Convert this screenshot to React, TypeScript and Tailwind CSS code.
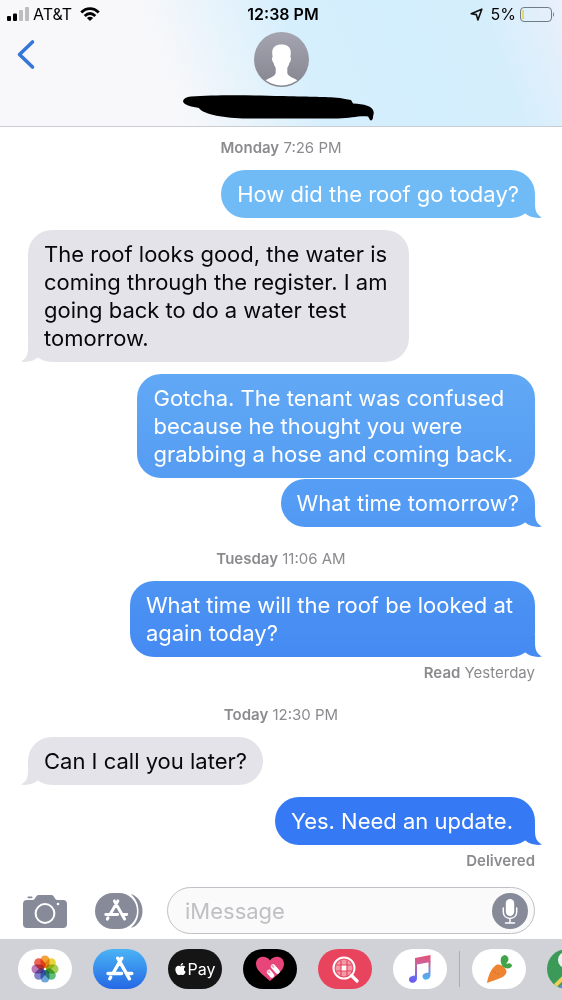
import { FaApple } from "react-icons/fa";

type Side = "in" | "out";

function Tail({ side, fill }: { side: Side; fill: string }) {
  return (
    <svg
      viewBox="0 0 24 22"
      className={
        side === "out"
          ? "absolute -right-[7px] bottom-0 h-[22px] w-6"
          : "absolute -left-[7px] bottom-0 h-[22px] w-6 -scale-x-100"
      }
      aria-hidden="true"
    >
      <path d="M7 8 15 0H17V8C17 15 19 19 24 21.600C18 22.600 11 21 7 17.300Z" fill={fill} />
    </svg>
  );
}

function Bubble({
  side,
  color,
  tail,
  text,
  roomy = false,
}: {
  side: Side;
  color: string;
  tail?: string;
  text: string;
  roomy?: boolean;
}) {
  return (
    <div
      className={`relative w-fit rounded-[24px] py-2.5 pl-4 text-[22px] leading-7 whitespace-pre-line ${
        roomy ? "pr-[22px]" : "pr-4"
      } ${side === "out" ? "mr-[27px] ml-auto text-white" : "ml-7 text-[#08080c]"} ${color}`}
    >
      {tail && <Tail side={side} fill={tail} />}
      <p className="relative">{text}</p>
    </div>
  );
}

function Stamp({ day, time }: { day: string; time: string }) {
  return (
    <p className="mb-3 text-center text-[15px] leading-5 text-[#8b8b8f]">
      <span className="font-semibold">{day}</span> {time}
    </p>
  );
}

function StoreMark() {
  return (
    <g fill="none" stroke="#fff" strokeWidth="3.400" strokeLinecap="round">
      <path d="M15.800 2.200 7.200 17M4.600 21.300 3.800 22.800M11.800 2.200 23.400 22.800M2 17.500H15.500M21.300 17.500H25.800" />
    </g>
  );
}

function StatusBar() {
  return (
    <div className="grid h-7 grid-cols-[1fr_auto_1fr] items-center px-[7px] text-[16px] leading-5 text-black">
      <div className="flex items-center gap-1">
        <svg viewBox="0 0 22 14" className="h-[14px] w-[22px]" role="img" aria-label="Signal">
          <rect x="0" y="9" width="4" height="5" rx="1" />
          <rect x="6" y="6.500" width="4" height="7.500" rx="1" />
          <rect x="12" y="3" width="4" height="11" rx="1" fill="#bdbdbf" />
          <rect x="18" y="0" width="4" height="14" rx="1" fill="#bdbdbf" />
        </svg>
        <span>AT&amp;T</span>
        <svg viewBox="0 0 20 14" className="ml-1 h-[14px] w-5" role="img" aria-label="Wi-Fi">
          <g fill="none" stroke="#000" strokeWidth="2.900">
            <path d="M1.300 5.400C6.300.300 13.700.300 18.700 5.400" />
            <path d="M4.700 9C8 5.900 12 5.900 15.300 9" />
          </g>
          <path d="M6.900 11C8.800 9.300 11.200 9.300 13.100 11L10 14Z" />
        </svg>
      </div>
      <span className="ml-1 font-semibold">12:38 PM</span>
      <div className="flex items-center justify-end gap-1">
        <svg viewBox="0 0 13 13" className="mr-1 h-[13px] w-[13px]" role="img" aria-label="Location">
          <path d="M1.200 5.700 11.800 1.200 7.900 12 6.400 6.600Z" fill="none" stroke="#111" strokeWidth="1.600" strokeLinejoin="round" />
        </svg>
        <span>5%</span>
        <svg viewBox="0 0 35 15" className="h-[15px] w-[35px]" role="img" aria-label="Battery">
          <rect x=".500" y=".500" width="31" height="14" rx="3.500" fill="none" stroke="#6f7d84" />
          <path d="M3 3V12" stroke="#e5cf45" strokeWidth="1.500" />
          <path d="M33 5Q35 7.500 33 10Z" fill="#6b777d" />
        </svg>
      </div>
    </div>
  );
}

function Header() {
  return (
    <header className="border-b border-[#c9cdd2] bg-[linear-gradient(70deg,#f8f8fa_0%,#f8f8fa_30%,#e6f3fb_43%,#d6effd_54%,#d3eefd_72%,#d5eefc_86%,#e4effb_97%,#ebf1fb_100%)]">
      <StatusBar />
      <div className="grid grid-cols-[1fr_auto_1fr] pb-[3px]">
        <button type="button" aria-label="Back" className="mt-[11px] ml-[15px] h-8 w-6">
          <svg viewBox="0 0 24 32" className="h-8 w-6">
            <path d="M17.500 3 4.500 15.500 17.500 28" fill="none" stroke="#3477d9" strokeWidth="3.600" strokeLinecap="round" strokeLinejoin="round" />
          </svg>
        </button>
        <div className="flex flex-col items-center pt-1">
          <svg viewBox="0 0 55 55" className="h-[55px] w-[55px]" role="img" aria-label="Contact">
            <defs>
              <linearGradient id="avatar" x1="0" y1="0" x2="0" y2="1">
                <stop offset="0" stopColor="#a4a5b0" />
                <stop offset="1" stopColor="#84858f" />
              </linearGradient>
              <clipPath id="avatarClip">
                <circle cx="27.500" cy="27.500" r="26" />
              </clipPath>
            </defs>
            <circle cx="27.500" cy="27.500" r="27.500" fill="url(#avatar)" />
            <path
              clipPath="url(#avatarClip)"
              fill="#fff"
              d="M27.500 12.500C33 12.500 37 15 36.800 21C36.700 23 36.300 24.500 36.500 25.500C37.600 26 36.800 29.800 35.300 31C34.900 33.500 33.800 34.500 33.300 36V41C34 45 41 46 45 49.500V56H10V49.500C14 46 21 45 21.700 41V36C21.200 34.500 20.100 33.500 19.700 31C18.200 29.800 17.400 26 18.500 25.500C18.700 24.500 18.300 23 18.200 21C18 15 22 12.500 27.500 12.500Z"
            />
          </svg>
          <svg viewBox="0 0 196 28" className="mt-2 h-7 w-[196px]" aria-hidden="true">
            <path d="M8 1.500C30 0 60 0 100 1C130 2 140 1.500 157 3L162 4L168 5L170 8.500C181 9 190 11 190.700 17C191 19 190 20 190 23Q188 28 186 23L185 21.500C175 20.500 168 23.500 155 23.500H60C38 23 18 18 16 13C10 12 0 10 0 6Q1 2 8 1.500Z" />
          </svg>
        </div>
      </div>
    </header>
  );
}

function Composer() {
  return (
    <div className="mt-4 flex items-center pr-[27px] pb-[5px] pl-[23px]">
      <button type="button" aria-label="Camera" className="mr-7 h-[34px] w-11 shrink-0">
        <svg viewBox="0 0 44 34" className="h-[34px] w-11">
          <path d="M4 6H10C12 6 13 1 15.500 1H28.500C31 1 32 6 34 6H40Q44 6 44 10V30Q44 34 40 34H4Q0 34 0 30V10Q0 6 4 6Z" fill="#868a99" />
          <rect x="4.500" y="2.500" width="5" height="1.800" rx=".800" fill="#868a99" />
          <circle cx="22" cy="19.500" r="9.400" fill="none" stroke="#fff" strokeWidth="2" />
          <circle cx="35" cy="10" r="1.300" fill="#fff" />
        </svg>
      </button>
      <button type="button" aria-label="Apps" className="mr-6 h-9 w-12 shrink-0">
        <svg viewBox="0 0 48 36" className="h-9 w-12">
          <path d="M36 1C43 3 47.500 10 47.500 18S43 33 36 35C41 30 43.500 25 43.500 18S41 6 36 1Z" fill="#868a99" />
          <rect x="0" y="0" width="42" height="36" rx="18" fill="#868a99" />
          <g transform="translate(9 6) scale(.880)">
            <StoreMark />
          </g>
        </svg>
      </button>
      <div className="flex h-[47px] min-w-0 flex-1 items-center rounded-full border border-[#c0c1c6] bg-[#fafafb] pr-1.5 pl-[17px]">
        <input
          type="text"
          aria-label="iMessage"
          placeholder="iMessage"
          className="min-w-0 flex-1 bg-transparent text-[22px] leading-7 outline-none placeholder:text-[#c0c0c4]"
        />
        <button type="button" aria-label="Dictate" className="h-9 w-9 shrink-0">
          <svg viewBox="0 0 36 36" className="h-9 w-9">
            <circle cx="18" cy="18" r="18" fill="#868a99" />
            <rect x="13.800" y="6" width="8.400" height="17" rx="4.200" fill="#fff" />
            <path d="M11.300 15V19C11.300 27.500 24.700 27.500 24.700 19V15M18 25.500V30M13.500 30H22.500" fill="none" stroke="#fff" strokeWidth="1.500" strokeLinecap="round" />
          </svg>
        </button>
      </div>
    </div>
  );
}

const petals = ["#f4a13a", "#e8d53c", "#a5cf52", "#5fbd7d", "#6ba7dc", "#8183c9", "#bb7bb8", "#ee6354"];
const pill = "flex h-10 w-[54px] shrink-0 items-center justify-center overflow-hidden rounded-full";

function Dock() {
  return (
    <nav aria-label="Apps" className="flex overflow-hidden bg-[#d1d2d7] pt-[10px] pb-[11px] pl-[18px]">
      <div className="flex gap-[21px]">
        <button type="button" aria-label="Photos" className={`${pill} bg-white`}>
          <svg viewBox="0 0 28 28" className="h-7 w-7">
            {petals.map((c, i) => (
              <rect key={c} x="9.500" y=".500" width="9" height="12.500" rx="4.500" fill={c} className="mix-blend-multiply" transform={`rotate(${i * 45} 14 14)`} />
            ))}
          </svg>
        </button>
        <button type="button" aria-label="App Store" className={`${pill} bg-linear-to-b from-[#4cb3f5] to-[#2767e4]`}>
          <svg viewBox="0 0 28 26" className="h-[26px] w-7">
            <StoreMark />
          </svg>
        </button>
        <button type="button" aria-label="Apple Pay" className={`${pill} gap-[2px] bg-[#151515] text-[16px] text-white`}>
          <FaApple className="h-[14px] w-[11px]" />
          <span>Pay</span>
        </button>
        <button type="button" aria-label="Digital Touch" className={`${pill} bg-black`}>
          <svg viewBox="0 0 28 26" className="h-[26px] w-7">
            <path d="M14 25C10 21 0 15.500 0 8C0 0 10-1.500 14 4.500C18-1.500 28 0 28 8C28 15.500 18 21 14 25Z" fill="#e8467a" />
            <g stroke="#fff" strokeWidth="4.600" strokeLinecap="round">
              <path d="M17 10.500 21.500 15.500M13 16 16 19.500" />
            </g>
            <path d="M16.200 9.700 17.400 10.900M12.200 15.200 13.400 16.400" stroke="#f3a4bd" strokeWidth="2" strokeLinecap="round" />
          </svg>
        </button>
        <button type="button" aria-label="Images" className={`${pill} bg-[#e9445e]`}>
          <svg viewBox="0 0 27 27" className="h-[27px] w-[27px]" fill="none" stroke="#fff" strokeLinecap="round">
            <circle cx="12" cy="12" r="10.500" strokeWidth="2" />
            <circle cx="12" cy="12" r="8.500" fill="#f29aa8" strokeWidth="0" />
            <path d="M9 9H15V15H9Z" fill="#fff" strokeWidth="0" />
            <path d="M4.500 9H19.500M4.500 15H19.500M9 4.500V19.500M15 4.500V19.500" stroke="#e9445e" strokeWidth="1.200" />
            <path d="M19.500 19.500 25 25" strokeWidth="3.200" />
          </svg>
        </button>
        <button type="button" aria-label="Music" className={`${pill} bg-white`}>
          <svg viewBox="0 0 22 28" className="h-7 w-[22px]">
            <defs>
              <linearGradient id="note" gradientUnits="userSpaceOnUse" x1="0" y1="0" x2="0" y2="28">
                <stop offset="0" stopColor="#e7506f" />
                <stop offset=".350" stopColor="#c667a4" />
                <stop offset=".800" stopColor="#6a6cec" />
                <stop offset="1" stopColor="#6a50ee" />
              </linearGradient>
              <linearGradient id="noteRight" gradientUnits="userSpaceOnUse" x1="0" y1="4" x2="0" y2="25">
                <stop offset="0" stopColor="#e7506f" />
                <stop offset=".600" stopColor="#7196df" />
                <stop offset="1" stopColor="#45b8ee" />
              </linearGradient>
            </defs>
            <path d="M6 3 21.500 0V7L8 9.500V23C8 29 0 29 0 24.500C0 21 4 21 6 20.500Z" fill="url(#note)" />
            <path d="M19.500 6H21.500V19.500C21.500 26 13.500 26 13.500 21.500C13.500 18 18 18 19.500 17.500Z" fill="url(#noteRight)" />
          </svg>
        </button>
      </div>
      <div className="mx-3 h-9 w-px shrink-0 self-center bg-[#abacb2]" />
      <div className="flex gap-[21px]">
        <button type="button" aria-label="Carrot" className={`${pill} bg-white`}>
          <svg viewBox="0 0 26 28" className="h-7 w-[26px]">
            <path d="M9 11C12 7.500 19 11 20.500 16C21 22 12 24 1 28C2 22 4.500 14.500 9 11Z" fill="#ee8432" />
            <path d="M16.500 11C13 5 15 1 18.500 0C23 1 24 5 20 9C24 7 26 9 26 11C24 14 20 14 17.500 12Z" fill="#42a448" />
            <path d="M7 16 10 18M13 20 11 18" stroke="#cf6d2c" strokeWidth=".800" />
          </svg>
        </button>
        <button type="button" aria-label="Maps" className={pill}>
          <svg viewBox="0 0 54 40" className="h-10 w-[54px]">
            <rect width="54" height="40" fill="#3c9a59" />
            <path d="M10 40 20 30 34 40Z" fill="#5a8fdc" />
            <path d="M5 40 24 21" stroke="#f1cf59" strokeWidth="4" />
            <circle cx="19" cy="11" r="8" fill="#edf1ee" />
          </svg>
        </button>
      </div>
    </nav>
  );
}

export default function App() {
  return (
    <div className="flex min-h-screen flex-col overflow-hidden bg-white font-[Inter,'Liberation_Sans',sans-serif]">
      <Header />
      <main className="flex-1 pt-[11px]">
        <Stamp day="Monday" time="7:26 PM" />
        <div className="flex flex-col gap-3">
          <Bubble side="out" color="bg-[#70baf6]" tail="#70baf6" text="How did the roof go today?" />
          <Bubble
            side="in"
            roomy
            color="bg-[#e4e3e9]"
            tail="#e4e3e9"
            text={"The roof looks good, the water is\ncoming through the register. I am\ngoing back to do a water test\ntomorrow."}
          />
          <div className="flex flex-col gap-px">
            <Bubble
              side="out"
              roomy
              color="bg-linear-to-b from-[#61a9f5] to-[#559cf3]"
              text={"Gotcha. The tenant was confused\nbecause he thought you were\ngrabbing a hose and coming back."}
            />
            <Bubble side="out" color="bg-linear-to-b from-[#579ff5] to-[#5098f3]" tail="#5199f3" text="What time tomorrow?" />
          </div>
        </div>
        <div className="mt-[22px]">
          <Stamp day="Tuesday" time="11:06 AM" />
          <Bubble
            side="out"
            roomy
            color="bg-linear-to-b from-[#4d94f3] to-[#458af2]"
            tail="#468bf2"
            text={"What time will the roof be looked at\nagain today?"}
          />
          <p className="mt-1.5 mr-[27px] text-right text-[15px] leading-5 text-[#8b8b8f]">
            <span className="font-semibold">Read</span> Yesterday
          </p>
        </div>
        <div className="mt-[22px]">
          <Stamp day="Today" time="12:30 PM" />
          <div className="flex flex-col gap-3">
            <Bubble side="in" color="bg-[#e4e3e9]" tail="#e4e3e9" text="Can I call you later?" />
            <Bubble side="out" roomy color="bg-[#3679f4]" tail="#3679f4" text="Yes. Need an update." />
          </div>
          <p className="mt-1.5 mr-[27px] text-right text-[15px] leading-5 font-semibold text-[#8b8b8f]">Delivered</p>
        </div>
      </main>
      <Composer />
      <Dock />
    </div>
  );
}
